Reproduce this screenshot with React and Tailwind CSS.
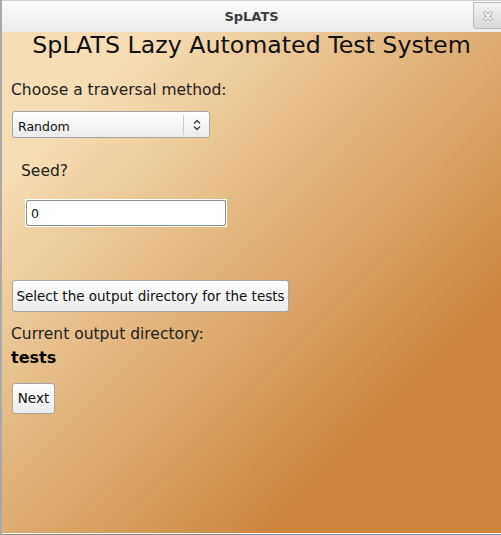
import { useState } from "react";

function Arrows() {
    return (
        <svg width="10" height="14" viewBox="0 0 10 14" className="text-[#3a3a3a]">
            <path d="M2 5.5 L5 2.5 L8 5.5" fill="none" stroke="currentColor" strokeWidth="1.3" />
            <path d="M2 8.5 L5 11.5 L8 8.5" fill="none" stroke="currentColor" strokeWidth="1.3" />
        </svg>
    );
}

function CloseIcon() {
    return (
        <svg width="12" height="12" viewBox="0 0 12 12">
            <path d="M3 3 L9 9 M9 3 L3 9" stroke="#a3a3a3" strokeWidth="3.4" strokeLinecap="round" />
            <path d="M3 3 L9 9 M9 3 L3 9" stroke="#ffffff" strokeWidth="1.8" strokeLinecap="round" />
        </svg>
    );
}

function App() {
    const [seed, setSeed] = useState("0");

    return (
        <div className="flex h-[535px] w-[501px] flex-col overflow-hidden border-l-2 border-[#a9a9a9] bg-[#c9c9c9] font-['DejaVu_Sans',sans-serif]">
            {/* title bar */}
            <div className="relative flex h-[32px] shrink-0 items-center justify-center border-t border-[#d0d0d0] bg-gradient-to-b from-[#fbfbfb] to-[#ececec]">
                <span className="text-[13px] font-bold text-[#3d3d3d]">SpLATS</span>
                <div className="absolute right-0 top-[1px] flex h-[27px] w-[28px] items-center justify-center rounded-bl-[4px] border border-r-0 border-[#bcbcbc] bg-gradient-to-b from-[#f3f3f3] to-[#d9d9d9]">
                    <CloseIcon />
                </div>
            </div>

            {/* content */}
            <div className="flex flex-1 flex-col bg-[linear-gradient(to_bottom_right,#f5deb3_0%,#f5deb3_15%,#cd853f_77%,#cd853f_100%)] px-[9px] text-[#222]">
                <h1 className="mt-[-1px] text-center text-[23.7px] leading-[28px] text-[#111]">SpLATS Lazy Automated Test System</h1>

                <p className="mt-[21px] text-[15.5px] leading-[20px]">Choose a traversal method:</p>

                <div className="ml-[1px] mt-[11px] flex h-[27px] w-[198px] items-center rounded-[3px] border border-[#a6a6a6] bg-gradient-to-b from-[#ffffff] to-[#ebebeb] pl-[5px]">
                    <span className="mt-[5px] flex-1 text-[12.5px] text-[#111]">Random</span>
                    <div className="h-[20px] w-px bg-[#cfcfcf]" />
                    <div className="flex w-[25px] items-center justify-center">
                        <Arrows />
                    </div>
                </div>

                <p className="ml-[10px] mt-[23px] text-[15.5px] leading-[20px]">Seed?</p>

                <div className="ml-[14px] mt-[18px] w-[202px] border border-white">
                    <input
                        value={seed}
                        onChange={(e) => setSeed(e.target.value)}
                        className="block h-[26px] w-full rounded-[3px] border border-[#8f8f8f] bg-white px-[4px] text-[12.5px] text-[#111] outline-none"
                    />
                </div>

                <button className="ml-[1px] mt-[53px] flex h-[32px] w-[277px] items-center justify-center rounded-[3px] border border-[#a6a6a6] bg-gradient-to-b from-[#ffffff] to-[#ebebeb] text-[13.5px] text-[#111]">
                    Select the output directory for the tests
                </button>

                <p className="mt-[12px] text-[15.5px] leading-[20px]">Current output directory:</p>
                <p className="mt-[4px] text-[16px] font-bold leading-[20px] text-black">tests</p>

                <button className="ml-[1px] mt-[15px] flex h-[31px] w-[43px] items-center justify-center rounded-[3px] border border-[#a6a6a6] bg-gradient-to-b from-[#ffffff] to-[#ebebeb] text-[13.5px] text-[#111]">
                    Next
                </button>
            </div>

            <div className="h-[2px] shrink-0 border-t border-white bg-[#8a8a8a]" />
        </div>
    );
}

export default App;
